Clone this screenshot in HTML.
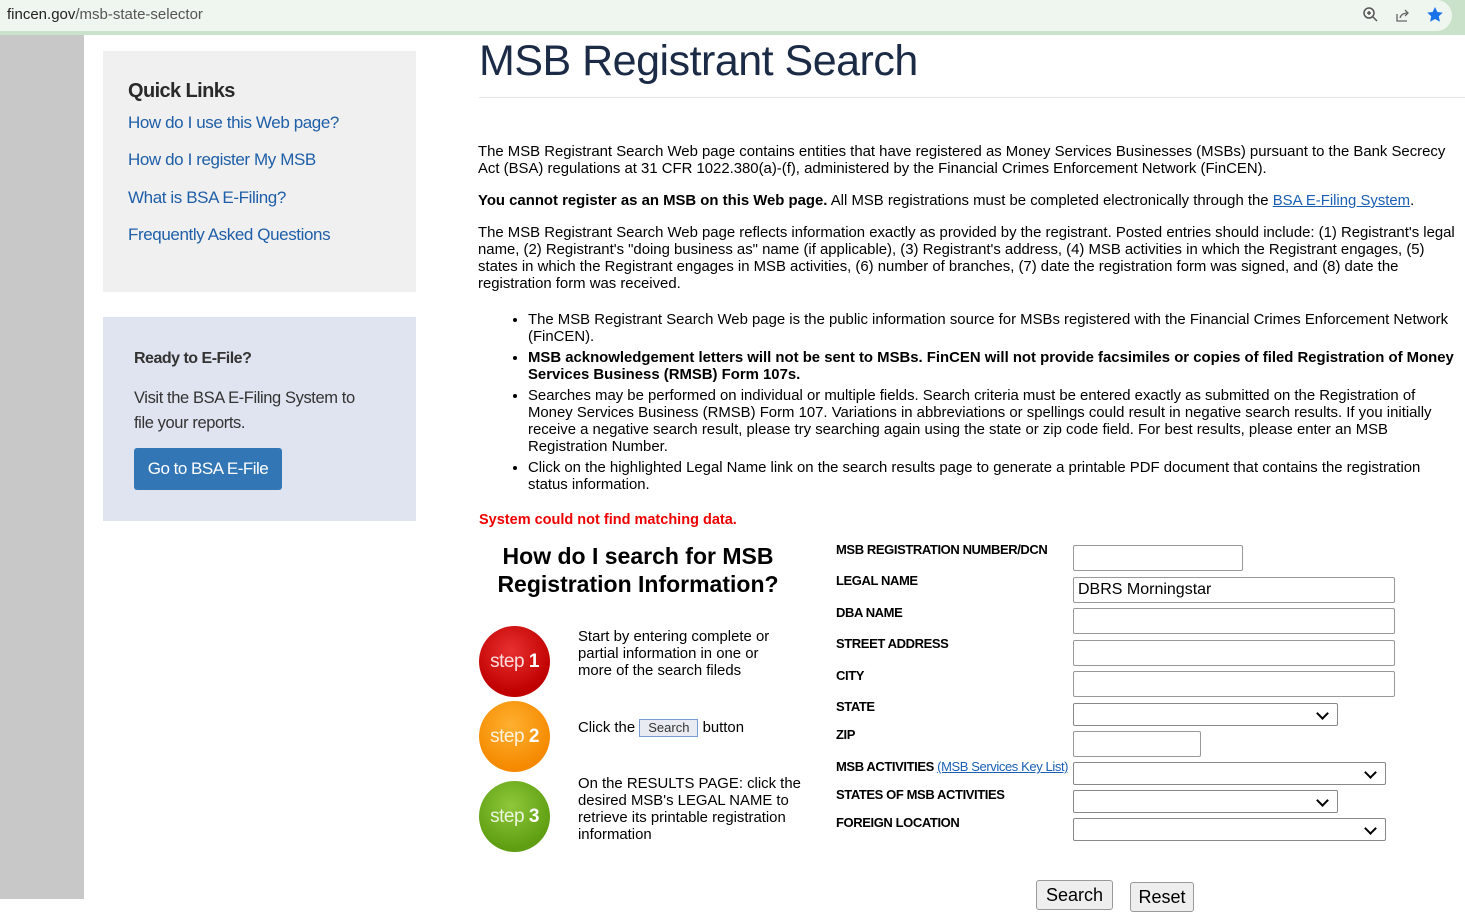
<!DOCTYPE html>
<html><head><meta charset="utf-8"><style>
*{margin:0;padding:0;box-sizing:border-box}
body{width:1465px;height:899px;overflow:hidden;background:#fff;font-family:"Liberation Sans",Arial,sans-serif;position:relative;color:#000}
.a{position:absolute}
.bar{left:0;top:0;width:1465px;height:35px;background:#c9e2c9}
.url{left:0;top:0;width:1452px;height:31px;background:#eff6ef;border-radius:0 16px 16px 0;font-size:15px;color:#555;padding:6px 0 0 7px}
.url b{font-weight:normal;color:#222}
.gray{left:0;top:35px;width:84px;height:864px;background:#c8c8c8}
.ql{left:103px;top:51px;width:313px;height:241px;background:#f0f0f0}
.ql h3{position:absolute;left:25px;top:29px;font-size:20px;font-weight:bold;color:#2a2a2a;letter-spacing:-.6px}
.ql a{position:absolute;left:25px;font-size:17px;color:#1f5fa8;text-decoration:none;letter-spacing:-.4px}
.ef{left:103px;top:317px;width:313px;height:204px;background:#dfe4f0;color:#333}
.btn{position:absolute;left:31px;top:131px;width:148px;height:42px;background:#3276b6;border-radius:3px;color:#fff;font-size:17px;text-align:center;line-height:42px;letter-spacing:-.5px}
h1{position:absolute;left:479px;top:37px;font-size:43px;font-weight:normal;color:#1b2a45;letter-spacing:-.5px}
.hr{left:479px;top:97px;width:986px;height:1px;background:#e5e5e5}
.t{font-size:14.9px;line-height:17px;left:478px;width:990px}
ul{position:absolute;left:510px;top:312px;width:948px;font-size:14.9px;line-height:17px}
ul li{margin-left:18px;margin-bottom:4px}
.lbl{position:absolute;left:836px;font-size:13px;font-weight:bold;letter-spacing:-.4px}
.in{position:absolute;left:1073px;border:1px solid #999;border-radius:2px;height:26px;background:#fff}
.sel{position:absolute;left:1073px;border:1px solid #888;border-radius:2px;height:23px;background:#fff}
.sel:after{content:"";position:absolute;right:10px;top:5px;width:7px;height:7px;border-right:2px solid #000;border-bottom:2px solid #000;transform:rotate(45deg)}
.step{position:absolute;left:479px;width:71px;height:71px;border-radius:50%;color:#fff;font-size:19px;text-align:center;line-height:71px;letter-spacing:-.5px}
.step span{opacity:.85}
.st{position:absolute;left:578px;font-size:14.9px;line-height:17px;width:205px}
.b{position:absolute;border:1px solid #999;border-radius:3px;background:#eee;font-size:18px;text-align:center;padding-top:4px}
</style></head><body>
<div class="a bar"></div>
<div class="a url"><b>fincen.gov</b>/msb-state-selector</div>
<svg class="a" style="left:1362px;top:6px" width="90" height="18" viewBox="0 0 90 18"><circle cx="7" cy="7" r="5" fill="none" stroke="#555" stroke-width="1.5"/><path d="M11 11l4 4M5 7h4M7 5v4" stroke="#555" stroke-width="1.5"/><path d="M35 8v7h10M38 12c1-4 4-5 8-5M43 4l3 3-3 3" fill="none" stroke="#666" stroke-width="1.3"/><path d="M73 1l2.4 5 5.4.6-4 3.7 1.1 5.4L73 13l-4.9 2.7 1.1-5.4-4-3.7 5.4-.6z" fill="#1a73e8"/></svg>
<div class="a gray"></div>
<div class="a ql"><h3>Quick Links</h3>
<a style="top:62px">How do I use this Web page?</a>
<a style="top:99px">How do I register My MSB</a>
<a style="top:137px">What is BSA E-Filing?</a>
<a style="top:174px">Frequently Asked Questions</a></div>
<div class="a ef"><div style="position:absolute;left:31px;top:33px;font-size:16px;font-weight:bold;letter-spacing:-.5px">Ready to E-File?</div>
<div style="position:absolute;left:31px;top:69px;font-size:16.5px;line-height:25px;width:240px;letter-spacing:-.4px">Visit the BSA E-Filing System to file your reports.</div>
<div class="btn">Go to BSA E-File</div></div>
<h1>MSB Registrant Search</h1>
<div class="a hr"></div>
<div class="a t" style="top:144px">The MSB Registrant Search Web page contains entities that have registered as Money Services Businesses (MSBs) pursuant to the Bank Secrecy Act (BSA) regulations at 31 CFR 1022.380(a)-(f), administered by the Financial Crimes Enforcement Network (FinCEN).</div>
<div class="a t" style="top:193px"><b>You cannot register as an MSB on this Web page.</b> All MSB registrations must be completed electronically through the <span style="color:#1a5fb4;text-decoration:underline">BSA E-Filing System</span>.</div>
<div class="a t" style="top:225px">The MSB Registrant Search Web page reflects information exactly as provided by the registrant. Posted entries should include: (1) Registrant's legal name, (2) Registrant's "doing business as" name (if applicable), (3) Registrant's address, (4) MSB activities in which the Registrant engages, (5) states in which the Registrant engages in MSB activities, (6) number of branches, (7) date the registration form was signed, and (8) date the registration form was received.</div>
<ul>
<li>The MSB Registrant Search Web page is the public information source for MSBs registered with the Financial Crimes Enforcement Network (FinCEN).</li>
<li><b>MSB acknowledgement letters will not be sent to MSBs. FinCEN will not provide facsimiles or copies of filed Registration of Money Services Business (RMSB) Form 107s.</b></li>
<li>Searches may be performed on individual or multiple fields. Search criteria must be entered exactly as submitted on the Registration of Money Services Business (RMSB) Form 107. Variations in abbreviations or spellings could result in negative search results. If you initially receive a negative search result, please try searching again using the state or zip code field. For best results, please enter an MSB Registration Number.</li>
<li>Click on the highlighted Legal Name link on the search results page to generate a printable PDF document that contains the registration status information.</li>
</ul>
<div class="a" style="left:479px;top:512px;font-size:14.5px;font-weight:bold;color:#e00">System could not find matching data.</div>
<div class="a" style="left:479px;top:542px;width:318px;text-align:center;font-size:23px;font-weight:bold;line-height:28px">How do I search for MSB Registration Information?</div>
<div class="step" style="top:626px;background:radial-gradient(circle at 45% 35%,#e83030,#c00000 70%)"><span>step</span> <b>1</b></div>
<div class="step" style="top:701px;background:radial-gradient(circle at 45% 35%,#ffb030,#f58a00 70%)"><span>step</span> <b>2</b></div>
<div class="step" style="top:781px;background:radial-gradient(circle at 45% 35%,#8fc83a,#5f9e12 70%)"><span>step</span> <b>3</b></div>
<div class="st" style="top:629px">Start by entering complete or partial information in one or more of the search fileds</div>
<div class="st" style="top:719px;width:250px">Click the <span style="display:inline-block;border:1px solid #7a9cd3;background:#e8ecf2;font-size:13px;padding:0 8px;line-height:16px;color:#333">Search</span> button</div>
<div class="st" style="top:776px;width:224px">On the RESULTS PAGE: click the desired MSB's LEGAL NAME to retrieve its printable registration information</div>
<div class="lbl" style="top:542px">MSB REGISTRATION NUMBER/DCN</div>
<div class="lbl" style="top:573px">LEGAL NAME</div>
<div class="lbl" style="top:605px">DBA NAME</div>
<div class="lbl" style="top:636px">STREET ADDRESS</div>
<div class="lbl" style="top:668px">CITY</div>
<div class="lbl" style="top:699px">STATE</div>
<div class="lbl" style="top:727px">ZIP</div>
<div class="lbl" style="top:759px">MSB ACTIVITIES <span style="font-weight:normal;color:#1a5fb4;text-decoration:underline">(MSB Services Key List)</span></div>
<div class="lbl" style="top:787px">STATES OF MSB ACTIVITIES</div>
<div class="lbl" style="top:815px">FOREIGN LOCATION</div>
<div class="in" style="top:545px;width:170px"></div>
<div class="in" style="top:577px;width:322px;font-size:16px;padding:3px 4px">DBRS Morningstar</div>
<div class="in" style="top:608px;width:322px"></div>
<div class="in" style="top:640px;width:322px"></div>
<div class="in" style="top:671px;width:322px"></div>
<div class="sel" style="top:703px;width:265px"></div>
<div class="in" style="top:731px;width:128px"></div>
<div class="sel" style="top:762px;width:313px"></div>
<div class="sel" style="top:790px;width:265px"></div>
<div class="sel" style="top:818px;width:313px"></div>
<div class="b" style="left:1036px;top:880px;width:77px;height:30px">Search</div>
<div class="b" style="left:1130px;top:882px;width:64px;height:30px">Reset</div>
</body></html>
